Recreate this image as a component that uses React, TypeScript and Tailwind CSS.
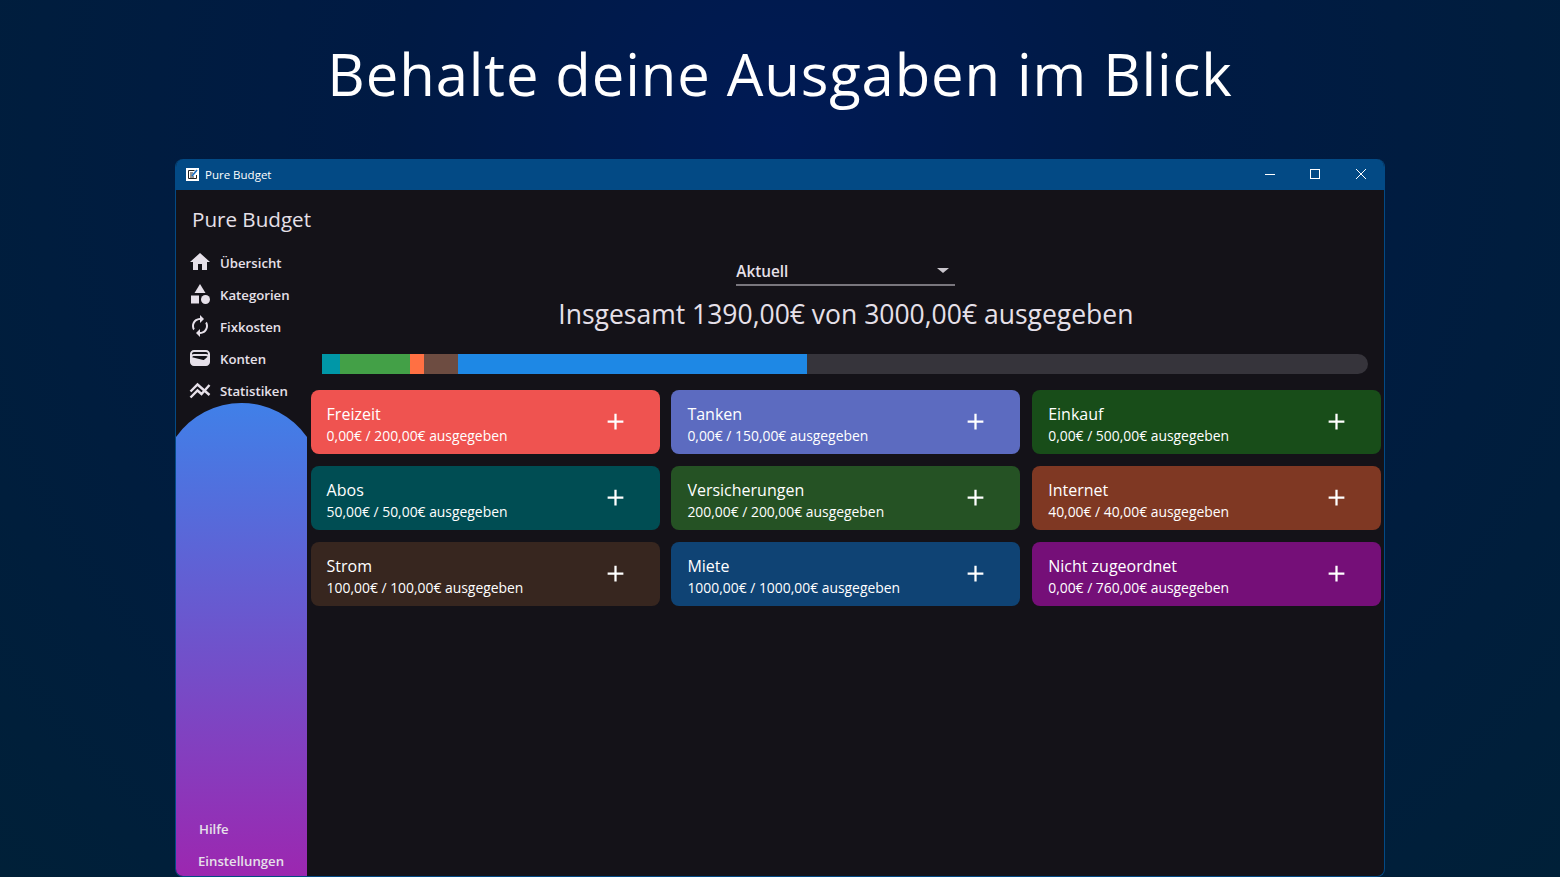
import { MdHome, MdCategory, MdAutorenew, MdWallet, MdAdd } from "react-icons/md";

const font = "font-['Open_Sans','Noto_Sans',sans-serif]";

function StatsIcon({ size, className }: { size: number; className?: string }) {
  return (
    <svg width={size} height={size} viewBox="0 0 24 24" className={className} fill="none" stroke="currentColor" strokeWidth="2.4">
      <path d="M2.5 13.5 9.5 6.5 21.5 17" />
      <path d="M2.5 19.5 9.5 12.5 13.5 16 21.5 7" />
    </svg>
  );
}

const navItems = [
  { label: "Übersicht", icon: MdHome },
  { label: "Kategorien", icon: MdCategory },
  { label: "Fixkosten", icon: MdAutorenew },
  { label: "Konten", icon: MdWallet },
  { label: "Statistiken", icon: StatsIcon },
];

const segments = [
  { color: "bg-[#0097a7]", amount: 50 },
  { color: "bg-[#43a047]", amount: 200 },
  { color: "bg-[#ff7043]", amount: 40 },
  { color: "bg-[#6d4c41]", amount: 100 },
  { color: "bg-[#1e88e5]", amount: 1000 },
];

const categories = [
  { name: "Freizeit", text: "0,00€ / 200,00€ ausgegeben", color: "bg-[#ef5350]" },
  { name: "Tanken", text: "0,00€ / 150,00€ ausgegeben", color: "bg-[#5c6bc0]" },
  { name: "Einkauf", text: "0,00€ / 500,00€ ausgegeben", color: "bg-[#184d19]" },
  { name: "Abos", text: "50,00€ / 50,00€ ausgegeben", color: "bg-[#004d53]" },
  { name: "Versicherungen", text: "200,00€ / 200,00€ ausgegeben", color: "bg-[#255224]" },
  { name: "Internet", text: "40,00€ / 40,00€ ausgegeben", color: "bg-[#7f3823]" },
  { name: "Strom", text: "100,00€ / 100,00€ ausgegeben", color: "bg-[#37261f]" },
  { name: "Miete", text: "1000,00€ / 1000,00€ ausgegeben", color: "bg-[#0f4374]" },
  { name: "Nicht zugeordnet", text: "0,00€ / 760,00€ ausgegeben", color: "bg-[#750f78]" },
];

function CategoryCard({ name, text, color }: { name: string; text: string; color: string }) {
  return (
    <div className={`flex h-16 items-center justify-between rounded-lg pl-4 pr-[31px] text-white ${color}`}>
      <div className="pt-[6px]">
        <div className="text-[16px] leading-[22px]">{name}</div>
        <div className="text-[13.9px] leading-[22px]">{text}</div>
      </div>
      <MdAdd size={27} className="mb-[2px]" />
    </div>
  );
}

function Sidebar() {
  return (
    <aside className="flex w-[131px] shrink-0 flex-col">
      <div className="whitespace-nowrap pl-4 pt-[13px] text-[20.6px] leading-[32px] text-[#e6e0e9]">Pure Budget</div>
      <nav className="mt-[11px] flex flex-col">
        {navItems.map(({ label, icon: Icon }) => (
          <div key={label} className="flex h-8 items-center gap-[8px] pl-[12px] text-[13.2px] font-semibold text-[#e6e0e9]">
            <Icon size={24} className="shrink-0" />
            <span className="pt-[4px]">{label}</span>
          </div>
        ))}
      </nav>
      <div className="mt-[-3px] flex flex-1 flex-col items-center justify-end bg-linear-to-b/srgb from-[#4080e8] to-[#9c27b0] text-[13.2px] font-semibold text-[#e6e0e9] [clip-path:path('M0_34A80_80_0_0_1_131_34V600H0Z')]">
        <div className="flex h-8 w-full items-center pl-[23px] pt-[4px]">Hilfe</div>
        <div className="flex h-8 w-full items-center pl-[22px] pt-[4px]">Einstellungen</div>
      </div>
    </aside>
  );
}

export default function App() {
  return (
    <div className={`flex h-[877px] w-[1560px] flex-col items-center overflow-hidden bg-[radial-gradient(ellipse_at_50%_15%,#001a55_0%,#001a44_35%,#002038_100%)] ${font}`}>
      <h1 className="flex h-[159px] items-center pb-[12px] text-[58px] tracking-[0.9px] text-white">Behalte deine Ausgaben im Blick</h1>
      <div className="flex w-[1210px] flex-1 flex-col overflow-hidden rounded-lg border-x border-b border-[#034a85] bg-[#141218]">
        <div className="flex h-[31px] shrink-0 items-center bg-[#034a85] pl-[10px] text-[11.5px] text-white">
          <svg width="13" height="13" viewBox="0 0 13 13" className="shrink-0">
            <rect width="13" height="13" fill="#fff" />
            <path d="M2.5 2.5h6M2.5 2.5v8h8V7M4 5h3M4 7h2M4 9h4" fill="none" stroke="#222" />
            <path d="M6 8l5-6" stroke="#1e6fc0" strokeWidth="1.8" />
          </svg>
          <span className="ml-[6px]">Pure Budget</span>
          <div className="ml-auto flex items-center pb-[2px] text-white">
            <svg width="46" height="12" viewBox="0 0 46 12"><path d="M18 6.5h10" stroke="#fff" /></svg>
            <svg width="45" height="12" viewBox="0 0 45 12"><rect x="17.5" y="1.5" width="9" height="9" fill="none" stroke="#fff" /></svg>
            <svg width="46" height="12" viewBox="0 0 46 12"><path d="M18 1l10 10M28 1L18 11" stroke="#fff" /></svg>
          </div>
        </div>
        <div className="flex min-h-0 flex-1">
          <Sidebar />
          <main className="flex min-w-0 flex-1 flex-col pl-[3.6px] pr-[2.9px]">
            <div className="mt-[66px] flex h-[30px] w-[219px] items-center justify-between self-center border-b-2 border-[#79767d] text-[15.3px] font-semibold text-[#e6e0e9]">
              <span className="pt-[3px]">Aktuell</span>
              <span className="mr-[6px] h-0 w-0 border-x-[6px] border-t-[5px] border-x-transparent border-t-[#c9c5cc]" />
            </div>
            <div className="mt-[8px] text-center text-[26.5px] leading-[40px] text-[#e6e0e9]">Insgesamt 1390,00€ von 3000,00€ ausgegeben</div>
            <div className="ml-[11.9px] mr-[13px] mt-[20px] flex h-5 overflow-hidden rounded-r-full bg-[#36343b]">
              {segments.map((s) => (
                <div key={s.color} className={s.color} style={{ width: `${(s.amount / 3000) * 100}%` }} />
              ))}
            </div>
            <div className="mt-4 grid grid-cols-3 gap-x-[11.9px] gap-y-3">
              {categories.map((c) => (
                <CategoryCard key={c.name} {...c} />
              ))}
            </div>
          </main>
        </div>
      </div>
    </div>
  );
}
